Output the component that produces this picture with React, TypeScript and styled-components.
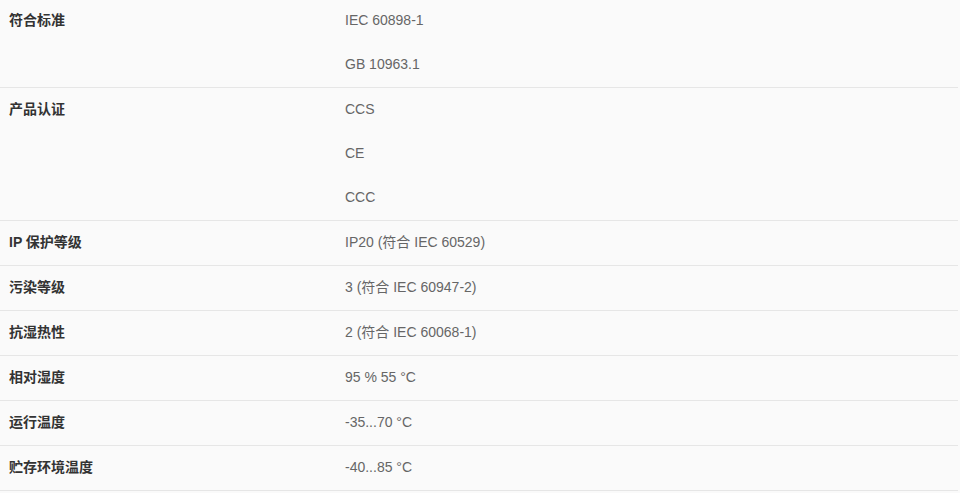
import styled, { createGlobalStyle } from "styled-components";

const GlobalStyle = createGlobalStyle`
  html, body {
    margin: 0;
    padding: 0;
    background: #fafafa;
  }
  body {
    font-family: "Liberation Sans", Arial, "Noto Sans CJK SC", sans-serif;
    font-size: 14px;
  }
`;

const Table = styled.div`
  width: 958px;
  margin-top: -1px;
`;

const Row = styled.div`
  display: grid;
  grid-template-columns: 335px 1fr;
  border-bottom: 1px solid #e6e6e6;
`;

const Label = styled.div`
  padding: 0 10px 2px 9px;
  height: 42px;
  line-height: 42px;
  font-weight: bold;
  color: #333;
`;

const Values = styled.div`
  display: flex;
  flex-direction: column;
  padding: 0 10px;
`;

const Value = styled.div`
  height: 42px;
  padding-bottom: 2px;
  line-height: 42px;
  color: #666;
`;

type Spec = { label: string; values: string[] };

const specs: Spec[] = [
  { label: "符合标准", values: ["IEC 60898-1", "GB 10963.1"] },
  { label: "产品认证", values: ["CCS", "CE", "CCC"] },
  { label: "IP 保护等级", values: ["IP20 (符合 IEC 60529)"] },
  { label: "污染等级", values: ["3 (符合 IEC 60947-2)"] },
  { label: "抗湿热性", values: ["2 (符合 IEC 60068-1)"] },
  { label: "相对湿度", values: ["95 % 55 °C"] },
  { label: "运行温度", values: ["-35...70 °C"] },
  { label: "贮存环境温度", values: ["-40...85 °C"] },
];

const App = () => {
  return (
    <>
      <GlobalStyle />
      <Table>
        {specs.map((s) => (
          <Row key={s.label}>
            <Label>{s.label}</Label>
            <Values>
              {s.values.map((v) => (
                <Value key={v}>{v}</Value>
              ))}
            </Values>
          </Row>
        ))}
      </Table>
    </>
  );
};

export default App;
